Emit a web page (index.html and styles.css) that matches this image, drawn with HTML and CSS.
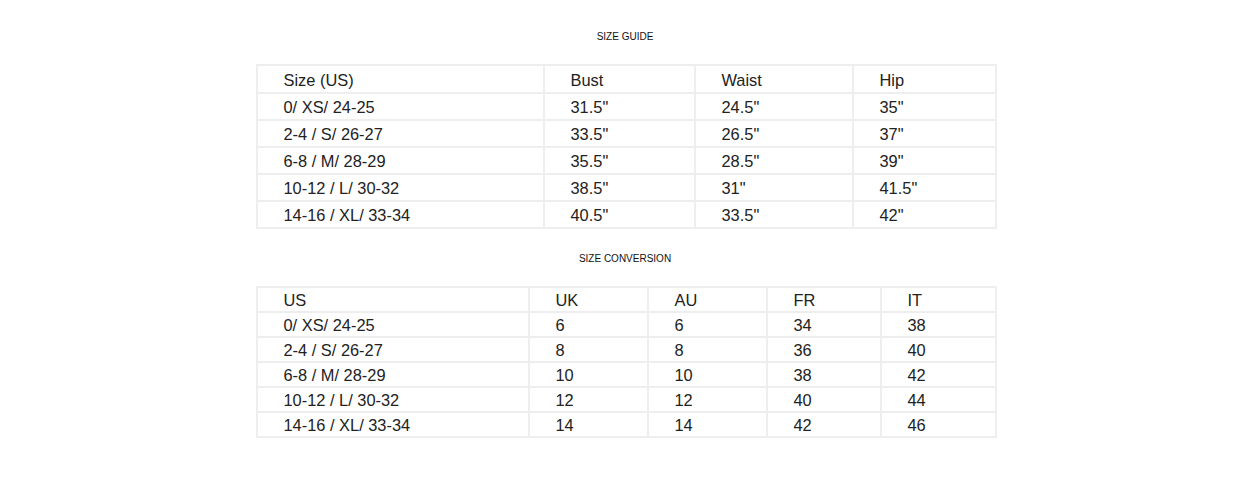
FILE: index.html
```html
<!DOCTYPE html>
<html>
<head>
<meta charset="utf-8">
<link rel="stylesheet" href="styles.css">
</head>
<body>
<div class="page">
  <h2 class="title">SIZE GUIDE</h2>
  <table class="chart guide">
    <colgroup><col class="g1"><col class="g2"><col class="g3"><col class="g4"></colgroup>
    <tr class="head"><td>Size (US)</td><td>Bust</td><td>Waist</td><td>Hip</td></tr>
    <tr><td>0/ XS/ 24-25</td><td>31.5"</td><td>24.5"</td><td>35"</td></tr>
    <tr><td>2-4 / S/ 26-27</td><td>33.5"</td><td>26.5"</td><td>37"</td></tr>
    <tr><td>6-8 / M/ 28-29</td><td>35.5"</td><td>28.5"</td><td>39"</td></tr>
    <tr><td>10-12 / L/ 30-32</td><td>38.5"</td><td>31"</td><td>41.5"</td></tr>
    <tr><td>14-16 / XL/ 33-34</td><td>40.5"</td><td>33.5"</td><td>42"</td></tr>
  </table>
  <h2 class="title second">SIZE CONVERSION</h2>
  <table class="chart conversion">
    <colgroup><col class="c1"><col class="c2"><col class="c3"><col class="c4"><col class="c5"></colgroup>
    <tr class="head"><td>US</td><td>UK</td><td>AU</td><td>FR</td><td>IT</td></tr>
    <tr><td>0/ XS/ 24-25</td><td>6</td><td>6</td><td>34</td><td>38</td></tr>
    <tr><td>2-4 / S/ 26-27</td><td>8</td><td>8</td><td>36</td><td>40</td></tr>
    <tr><td>6-8 / M/ 28-29</td><td>10</td><td>10</td><td>38</td><td>42</td></tr>
    <tr><td>10-12 / L/ 30-32</td><td>12</td><td>12</td><td>40</td><td>44</td></tr>
    <tr><td>14-16 / XL/ 33-34</td><td>14</td><td>14</td><td>42</td><td>46</td></tr>
  </table>
</div>
</body>
</html>
```
FILE: styles.css
```css
html, body {
  margin: 0;
  padding: 0;
  background: #fff;
}
body {
  padding-left: 6px;
  font-family: "Liberation Sans", Arial, sans-serif;
  color: #222;
}
.page {
  width: 739px;
  margin: 0 auto;
  display: flex;
  flex-direction: column;
}
.title {
  margin: 31px 0 21px;
  font-size: 10px;
  line-height: 12px;
  font-weight: normal;
  text-align: center;
  color: #111;
}
.title.second {
  margin-top: 24px;
}
.chart {
  width: 739px;
  table-layout: fixed;
  border-collapse: separate;
  border-spacing: 0;
  border-top: 2px solid #eeeeee;
  border-left: 2px solid #eeeeee;
}
.chart td {
  border-right: 2px solid #eeeeee;
  border-bottom: 2px solid #eeeeee;
  padding: 1px 0 0 26px;
  font-size: 16.4px;
  line-height: 18px;
  white-space: nowrap;
  vertical-align: middle;
}
.guide td { height: 24px; }
.guide .head td { height: 25px; }
.conversion td { height: 22px; }

.g1 { width: 287px; }
.g2 { width: 151px; }
.g3 { width: 158px; }
.g4 { width: 143px; }

.c1 { width: 272px; }
.c2 { width: 119px; }
.c3 { width: 119px; }
.c4 { width: 114px; }
.c5 { width: 115px; }
```
